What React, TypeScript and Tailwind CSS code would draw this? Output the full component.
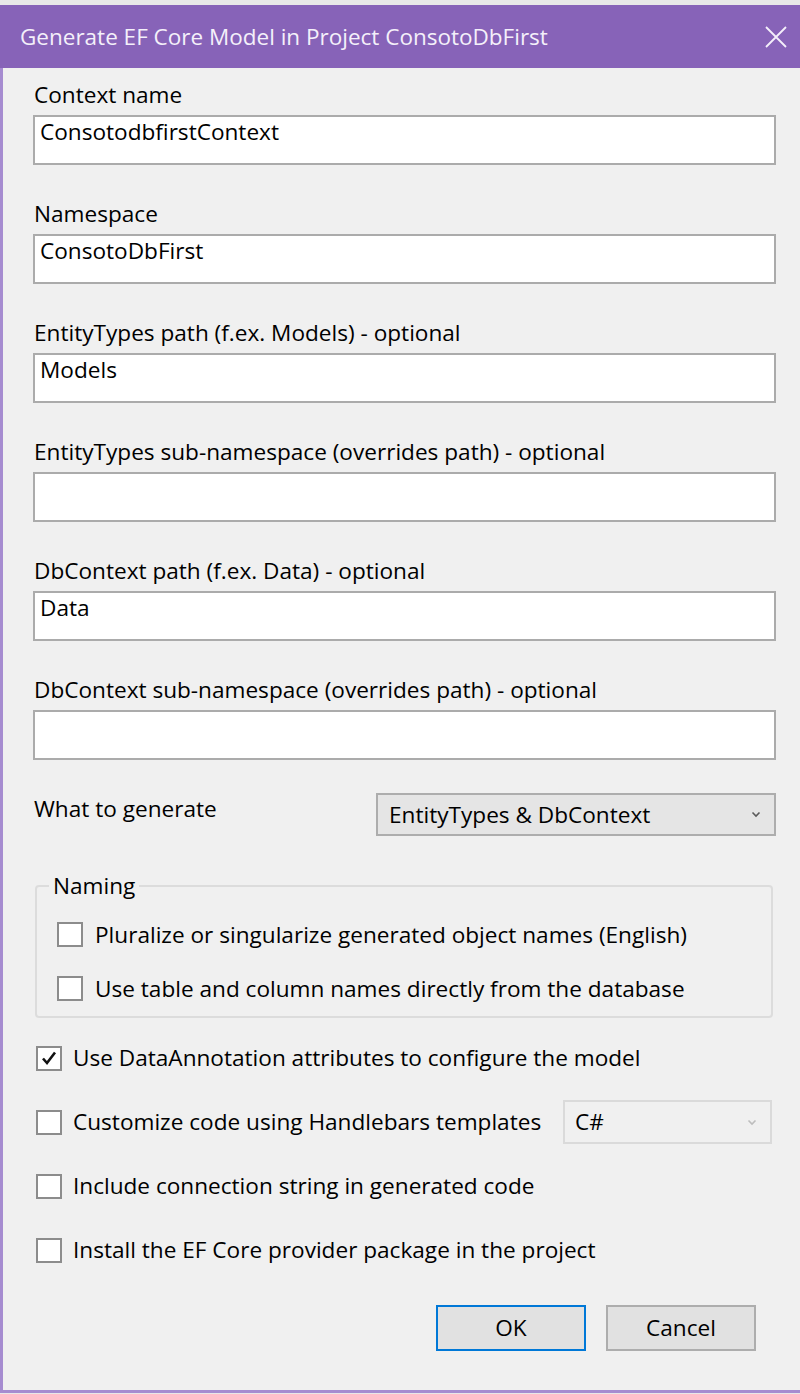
import React from "react";

type FieldProps = {
  label: string;
  value?: string;
};

const TextField = ({ label, value }: FieldProps) => {
  return (
    <div className="flex flex-col">
      <div className="h-[24px] leading-[24px] pl-[1px] text-[#000]">{label}</div>
      <div className="mt-[8px] h-[50px] border-2 border-[#ababab] bg-white pl-[5px] pt-[3px] leading-[24px]">
        {value}
      </div>
    </div>
  );
};

const Chevron = ({ color }: { color: string }) => (
  <svg width="10" height="7" viewBox="0 0 10 7" fill="none">
    <path d="M1.5 1.5 L5 5 L8.5 1.5" stroke={color} strokeWidth="1.6" />
  </svg>
);

const CheckBox = ({ checked }: { checked?: boolean }) => (
  <div className="w-[26px] h-[25px] shrink-0 border-2 border-[#8c8c8c] bg-white flex items-center justify-center">
    {checked && (
      <svg width="18" height="16" viewBox="0 0 18 16" fill="none">
        <path d="M3 8.5 L7 13 L15 2.5" stroke="#111" strokeWidth="2.6" />
      </svg>
    )}
  </div>
);

const CheckRow = ({ label, checked, gap }: { label: string; checked?: boolean; gap: string }) => (
  <div className={`flex items-center ${gap}`}>
    <CheckBox checked={checked} />
    <span className="leading-[24px]">{label}</span>
  </div>
);

export default function App() {
  const fields: FieldProps[] = [
    { label: "Context name", value: "ConsotodbfirstContext" },
    { label: "Namespace", value: "ConsotoDbFirst" },
    { label: "EntityTypes path (f.ex. Models) - optional", value: "Models" },
    { label: "EntityTypes sub-namespace (overrides path) - optional" },
    { label: "DbContext path (f.ex. Data) - optional", value: "Data" },
    { label: "DbContext sub-namespace (overrides path) - optional" },
  ];

  return (
    <div className="w-[800px] h-[1394px] bg-[#e8e8e8] pt-[5px] flex flex-col font-['Open_Sans',sans-serif] text-[22.6px] text-black">
      {/* title bar */}
      <div className="h-[63px] shrink-0 bg-[#8763b8] flex items-center justify-between pl-[20px] pr-[12px]">
        <span className="text-[22.5px] text-[#f4f0fa]">
          Generate EF Core Model in Project ConsotoDbFirst
        </span>
        <svg width="24" height="24" viewBox="0 0 24 24" fill="none">
          <path d="M2 2 L22 22 M22 2 L2 22" stroke="#f4f0fa" strokeWidth="1.8" />
        </svg>
      </div>

      {/* body */}
      <div className="flex-1 mb-[1px] bg-[#f0f0f0] border-l-[3px] border-b-[3px] border-[#a68cd0] pl-[30px] pr-[24px] pt-[15px] flex flex-col">
        <div className="flex flex-col gap-[37px]">
          {fields.map((f) => (
            <TextField key={f.label} label={f.label} value={f.value} />
          ))}
        </div>

        <div className="mt-[33px] flex items-start justify-between">
          <span className="pl-[1px] pt-[4px] leading-[24px]">What to generate</span>
          <div className="w-[400px] h-[43px] border-2 border-[#adadad] bg-[#e5e5e5] flex items-center justify-between pl-[11px] pr-[13px]">
            <span>EntityTypes &amp; DbContext</span>
            <Chevron color="#5a5a5a" />
          </div>
        </div>

        <fieldset className="mt-[38px] ml-[2px] mr-[3px] border-2 border-[#dcdcdc] rounded-[4px] pl-[20px] pt-[24px] pb-[15px] flex flex-col gap-[29px]">
          <legend className="ml-[-8px] px-[4px] leading-[24px]">Naming</legend>
          <CheckRow gap="gap-[12px]" label="Pluralize or singularize generated object names (English)" />
          <CheckRow gap="gap-[12px]" label="Use table and column names directly from the database" />
        </fieldset>

        <div className="mt-[18px] pl-[3px] flex flex-col gap-[20px]">
          <div className="h-[44px] flex items-center">
            <CheckRow gap="gap-[11px]" checked label="Use DataAnnotation attributes to configure the model" />
          </div>
          <div className="h-[44px] flex items-center">
            <CheckRow gap="gap-[11px]" label="Customize code using Handlebars templates" />
            <div className="ml-auto mr-[4px] w-[209px] h-[44px] border-2 border-[#dadada] bg-[#f0f0f0] flex items-center justify-between pl-[10px] pr-[13px]">
              <span>C#</span>
              <Chevron color="#bdbdbd" />
            </div>
          </div>
          <div className="h-[44px] flex items-center">
            <CheckRow gap="gap-[11px]" label="Include connection string in generated code" />
          </div>
          <div className="h-[44px] flex items-center">
            <CheckRow gap="gap-[11px]" label="Install the EF Core provider package in the project" />
          </div>
        </div>

        <div className="mt-[33px] flex justify-end gap-[20px] pr-[20px]">
          <button className="w-[150px] h-[46px] border-2 border-[#0078d7] bg-[#e1e1e1]">OK</button>
          <button className="w-[150px] h-[46px] border-2 border-[#adadad] bg-[#e1e1e1]">Cancel</button>
        </div>
      </div>
    </div>
  );
}
